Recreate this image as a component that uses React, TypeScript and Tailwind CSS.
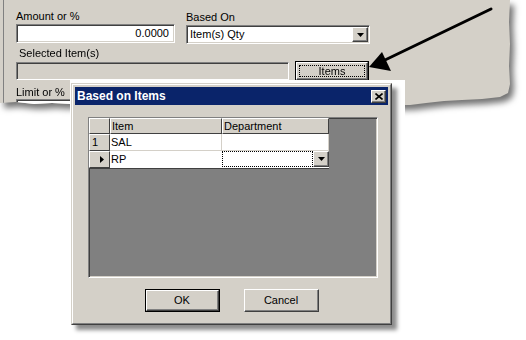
const raised =
  'border border-t-white border-l-white border-b-[#404040] border-r-[#404040] shadow-[inset_-1px_-1px_0_#808080]'
const sunken =
  'border border-t-[#808080] border-l-[#808080] border-b-white border-r-white shadow-[inset_1px_1px_0_#404040,inset_-1px_-1px_0_#d4d0c8]'

function DropButton({ className = '' }: { className?: string }) {
  return (
    <div className={`flex items-center justify-center bg-[#d4d0c8] ${raised} ${className}`}>
      <svg width="7" height="4" viewBox="0 0 7 4">
        <path d="M0 0H7L3.5 4Z" fill="#000" />
      </svg>
    </div>
  )
}

function Panel() {
  return (
    <div className="h-[116px] w-[520px] drop-shadow-[4px_5px_3px_rgba(0,0,0,0.55)]">
      <div className="h-[110px] w-[510px] bg-[#d4d0c8] [clip-path:polygon(0_0,510px_0,509px_22px,510px_44px,509px_66px,510px_84px,508px_93px,500px_97px,482px_99px,462px_100px,444px_101px,426px_103px,410px_105px,300px_106px,70px_104px,52px_103px,34px_104px,16px_102px,0_103px)]">
        <div className="ml-[3px] h-full border-l border-[#808080] pl-[12px] pt-[10px]">
          {/* amount / based on */}
          <div className="flex">
            <div className="w-[159px]">
              <div className="h-[13px]">Amount or %</div>
              <div className={`mt-[1px] flex h-[19px] items-center justify-end bg-white pr-[5px] ${sunken}`}>0.0000</div>
            </div>
            <div className="ml-[11px] w-[184px]">
              <div className="mt-[1px] h-[13px]">Based On</div>
              <div className={`mt-[1px] flex h-[19px] items-center bg-white pl-[3px] pr-[1px] ${sunken}`}>
                <span>Item(s) Qty</span>
                <DropButton className="ml-auto h-[15px] w-[16px]" />
              </div>
            </div>
          </div>

          {/* selected items */}
          <div className="mt-[3px] h-[13px] pl-[3px]">Selected Item(s)</div>
          <div className="mt-[1px] flex items-start">
            <div className={`mt-[1px] h-[18px] w-[273px] bg-[#d4d0c8] ${sunken}`} />
            <div className="ml-[6px] h-[20px] w-[74px] border border-black">
              <div className={`flex h-full items-center justify-center p-[2px] ${raised}`}>
                <div className="flex h-full w-full items-center justify-center border border-dotted border-black">Items</div>
              </div>
            </div>
          </div>

          {/* limit */}
          <div className="mt-[5px] h-[13px]">Limit or %</div>
          <div className={`h-[19px] w-[159px] bg-white pl-[3px] pt-[2px] text-[#333] ${sunken}`}>1.#QNAN0</div>
        </div>
      </div>
    </div>
  )
}

function Arrow() {
  return (
    <svg className="pointer-events-none absolute left-0 top-0" width="526" height="120" viewBox="0 0 526 120">
      <line x1="385" y1="60" x2="491" y2="9" stroke="#000" strokeWidth="3" strokeLinecap="round" />
      <path d="M369 67L382 52L391 71Z" fill="#000" />
    </svg>
  )
}

function Dialog() {
  return (
    <div className="absolute left-[70px] top-[80px] h-[260px] w-[335px] bg-white">
      <div className="ml-[1px] mt-[3px] h-[242px] w-[321px] border border-t-[#d4d0c8] border-l-[#d4d0c8] border-b-[#404040] border-r-[#404040] bg-[#d4d0c8] shadow-[5px_5px_4px_rgba(0,0,0,0.45)]">
        <div className="flex h-full flex-col border border-t-white border-l-white border-b-[#808080] border-r-[#808080] p-[2px]">
          {/* title bar */}
          <div className="flex h-[18px] items-center bg-[#0a246a] pl-[2px] pr-[2px]">
            <span className="text-[12px] font-bold text-white">Based on Items</span>
            <div className={`ml-auto flex h-[13px] w-[15px] items-center justify-center bg-[#d4d0c8] ${raised}`}>
              <svg width="8" height="7" viewBox="0 0 8 7">
                <path d="M0.5 0.5L7.5 6.5M7.5 0.5L0.5 6.5" stroke="#000" strokeWidth="1.6" />
              </svg>
            </div>
          </div>

          {/* grid */}
          <div className={`ml-[13px] mt-[12px] h-[161px] w-[290px] bg-[#808080] ${sunken}`}>
            <div className="grid w-[240px] grid-cols-[21px_112px_107px] border-b border-r border-[#404040]">
              <div className={`h-[16px] bg-[#d4d0c8] ${raised} shadow-none`} />
              <div className={`flex h-[16px] items-center bg-[#d4d0c8] pl-[1px] ${raised} shadow-none`}>Item</div>
              <div className={`flex h-[16px] items-center bg-[#d4d0c8] pl-[1px] ${raised} shadow-none`}>Department</div>

              <div className={`flex h-[17px] items-center bg-[#d4d0c8] pl-[2px] ${raised} shadow-none`}>1</div>
              <div className="flex h-[17px] items-center border-b border-r border-[#d4d0c8] bg-white pl-[1px]">SAL</div>
              <div className="h-[17px] border-b border-r border-[#d4d0c8] bg-white" />

              <div className={`flex h-[17px] items-center justify-end bg-[#d4d0c8] pr-[5px] ${raised} shadow-none`}>
                <svg width="4" height="7" viewBox="0 0 4 7">
                  <path d="M0 0L4 3.5L0 7Z" fill="#000" />
                </svg>
              </div>
              <div className="flex h-[17px] items-center bg-white pl-[1px]">RP</div>
              <div className="flex h-[17px] bg-white">
                <div className="h-[16px] flex-1 border border-dotted border-black" />
                <DropButton className="h-[16px] w-[16px]" />
              </div>
            </div>
          </div>

          {/* buttons */}
          <div className="mt-[11px] flex justify-center gap-[24px]">
            <div className="h-[23px] w-[75px] border border-black">
              <div className={`flex h-full items-center justify-center ${raised}`}>OK</div>
            </div>
            <div className={`flex h-[23px] w-[75px] items-center justify-center ${raised}`}>Cancel</div>
          </div>
        </div>
      </div>
    </div>
  )
}

export default function App() {
  return (
    <div className="relative h-[340px] w-[526px] overflow-hidden bg-white font-['Liberation_Sans',Arial,sans-serif] text-[11px] leading-[13px] text-black">
      <Panel />
      <Arrow />
      <Dialog />
    </div>
  )
}
